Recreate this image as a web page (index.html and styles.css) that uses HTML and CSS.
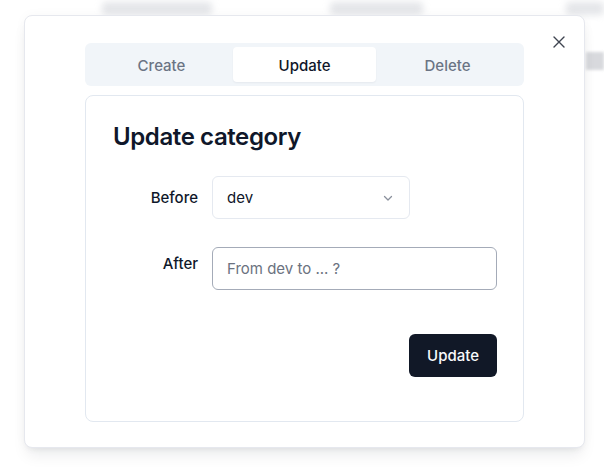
FILE: index.html
```html
<!DOCTYPE html>
<html lang="en">
<head>
<meta charset="utf-8">
<title>Update category</title>
<link rel="stylesheet" href="styles.css">
</head>
<body>
<div class="bg-page" aria-hidden="true">
  <div class="bg-head">
    <span class="blob blob-a"></span>
    <span class="blob blob-b"></span>
    <span class="blob blob-c"></span>
  </div>
  <div class="bg-row">
    <span class="blob blob-d"></span>
  </div>
</div>

<div class="modal" role="dialog">
  <button class="close" aria-label="Close">
    <svg width="12" height="12" viewBox="0 0 12 12"><path d="M1 1L11 11M11 1L1 11" stroke="#3f4450" stroke-width="1.4" stroke-linecap="round"/></svg>
  </button>

  <div class="tabs">
    <div class="tab">Create</div>
    <div class="tab active">Update</div>
    <div class="tab">Delete</div>
  </div>

  <div class="card">
    <h2 class="title">Update category</h2>
    <div class="form">
      <label class="label">Before</label>
      <div class="select">
        <span>dev</span>
        <svg width="12" height="12" viewBox="0 0 12 12"><path d="M2.5 4.5L6 8L9.5 4.5" fill="none" stroke="#8a909c" stroke-width="1.3" stroke-linecap="round" stroke-linejoin="round"/></svg>
      </div>
      <label class="label label-top">After</label>
      <input class="input" type="text" placeholder="From dev to ... ?">
    </div>
    <div class="actions">
      <button class="btn">Update</button>
    </div>
  </div>
</div>
</body>
</html>
```

FILE: styles.css
```css
* { box-sizing: border-box; }
html, body { margin: 0; padding: 0; }
body {
  width: 604px;
  height: 476px;
  overflow: hidden;
  background: #ffffff;
  font-family: Inter, "Noto Sans", "Liberation Sans", sans-serif;
  color: #0f172a;
  position: relative;
}

.bg-page { width: 604px; }
.bg-head {
  display: flex;
  align-items: flex-start;
  padding-left: 102px;
  height: 16px;
}
.blob {
  display: block;
  background: #c9ccd3;
  filter: blur(3.5px);
  opacity: 0.5;
  border-radius: 4px;
}
.blob-a { width: 116px; height: 13px; margin-top: 2px; }
.blob-b { width: 98px; height: 13px; margin-top: 2px; margin-left: 118px; }
.blob-c { width: 40px; height: 13px; margin-top: 2px; margin-left: 143px; }
.bg-row {
  display: flex;
  justify-content: flex-end;
  margin-top: 36px;
}
.blob-d { width: 18px; height: 18px; opacity: 0.65; filter: blur(1.5px); border-radius: 0; background: #c4c6cc; }

.modal {
  position: absolute;
  left: 24px;
  top: 15px;
  width: 561px;
  height: 433px;
  background: #ffffff;
  border: 1px solid #e6e8ee;
  border-radius: 8px;
  box-shadow: 0 10px 15px -3px rgba(15, 23, 42, 0.08), 0 4px 6px -4px rgba(15, 23, 42, 0.08), 0 0 12px rgba(15,23,42,0.03);
  padding: 27px 60px 0 60px;
}

.close {
  position: absolute;
  top: 20px;
  right: 19px;
  width: 12px;
  height: 12px;
  padding: 0;
  border: 0;
  background: none;
  display: flex;
}

.tabs {
  display: grid;
  grid-template-columns: 1fr 1fr 1fr;
  height: 43px;
  padding: 4px 5px;
  background: #f1f5f9;
  border-radius: 6px;
}
.tab {
  display: flex;
  align-items: center;
  justify-content: center;
  font-size: 15px;
  font-weight: 500;
  color: #6b7484;
  border-radius: 4px;
  padding-top: 1px;
}
.tab.active {
  background: #ffffff;
  color: #0f172a;
  box-shadow: 0 1px 2px rgba(15, 23, 42, 0.05);
}

.card {
  margin-top: 9px;
  height: 327px;
  border: 1px solid #e2e8f0;
  border-radius: 8px;
  padding: 25px 26px 0 27px;
}

.title {
  margin: 0;
  font-size: 24px;
  line-height: 32px;
  font-weight: 600;
  letter-spacing: -0.4px;
  color: #0f172a;
}

.form {
  margin-top: 23px;
  display: grid;
  grid-template-columns: 85px 1fr;
  column-gap: 14px;
  row-gap: 28px;
  align-items: center;
}
.label {
  text-align: right;
  font-size: 15px;
  line-height: 20px;
  font-weight: 500;
  color: #0f172a;
}
.label-top {
  align-self: start;
  padding-top: 7px;
}

.select {
  width: 198px;
  height: 43px;
  border: 1px solid #e5e9f0;
  border-radius: 6px;
  padding: 0 15px 0 14px;
  display: flex;
  align-items: center;
  justify-content: space-between;
  font-size: 15px;
  color: #0f172a;
}

.input {
  width: 285px;
  height: 43px;
  border: 1px solid #a4abb8;
  border-radius: 6px;
  padding: 0 14px;
  font-family: inherit;
  font-size: 15px;
  color: #0f172a;
  outline: none;
  background: #fff;
}
.input::placeholder { color: #6b7280; }

.actions {
  display: flex;
  justify-content: flex-end;
  margin-top: 44px;
}
.btn {
  width: 88px;
  height: 43px;
  border: 0;
  border-radius: 6px;
  background: #111827;
  color: #f8fafc;
  font-family: inherit;
  font-size: 15px;
  font-weight: 500;
}
```
